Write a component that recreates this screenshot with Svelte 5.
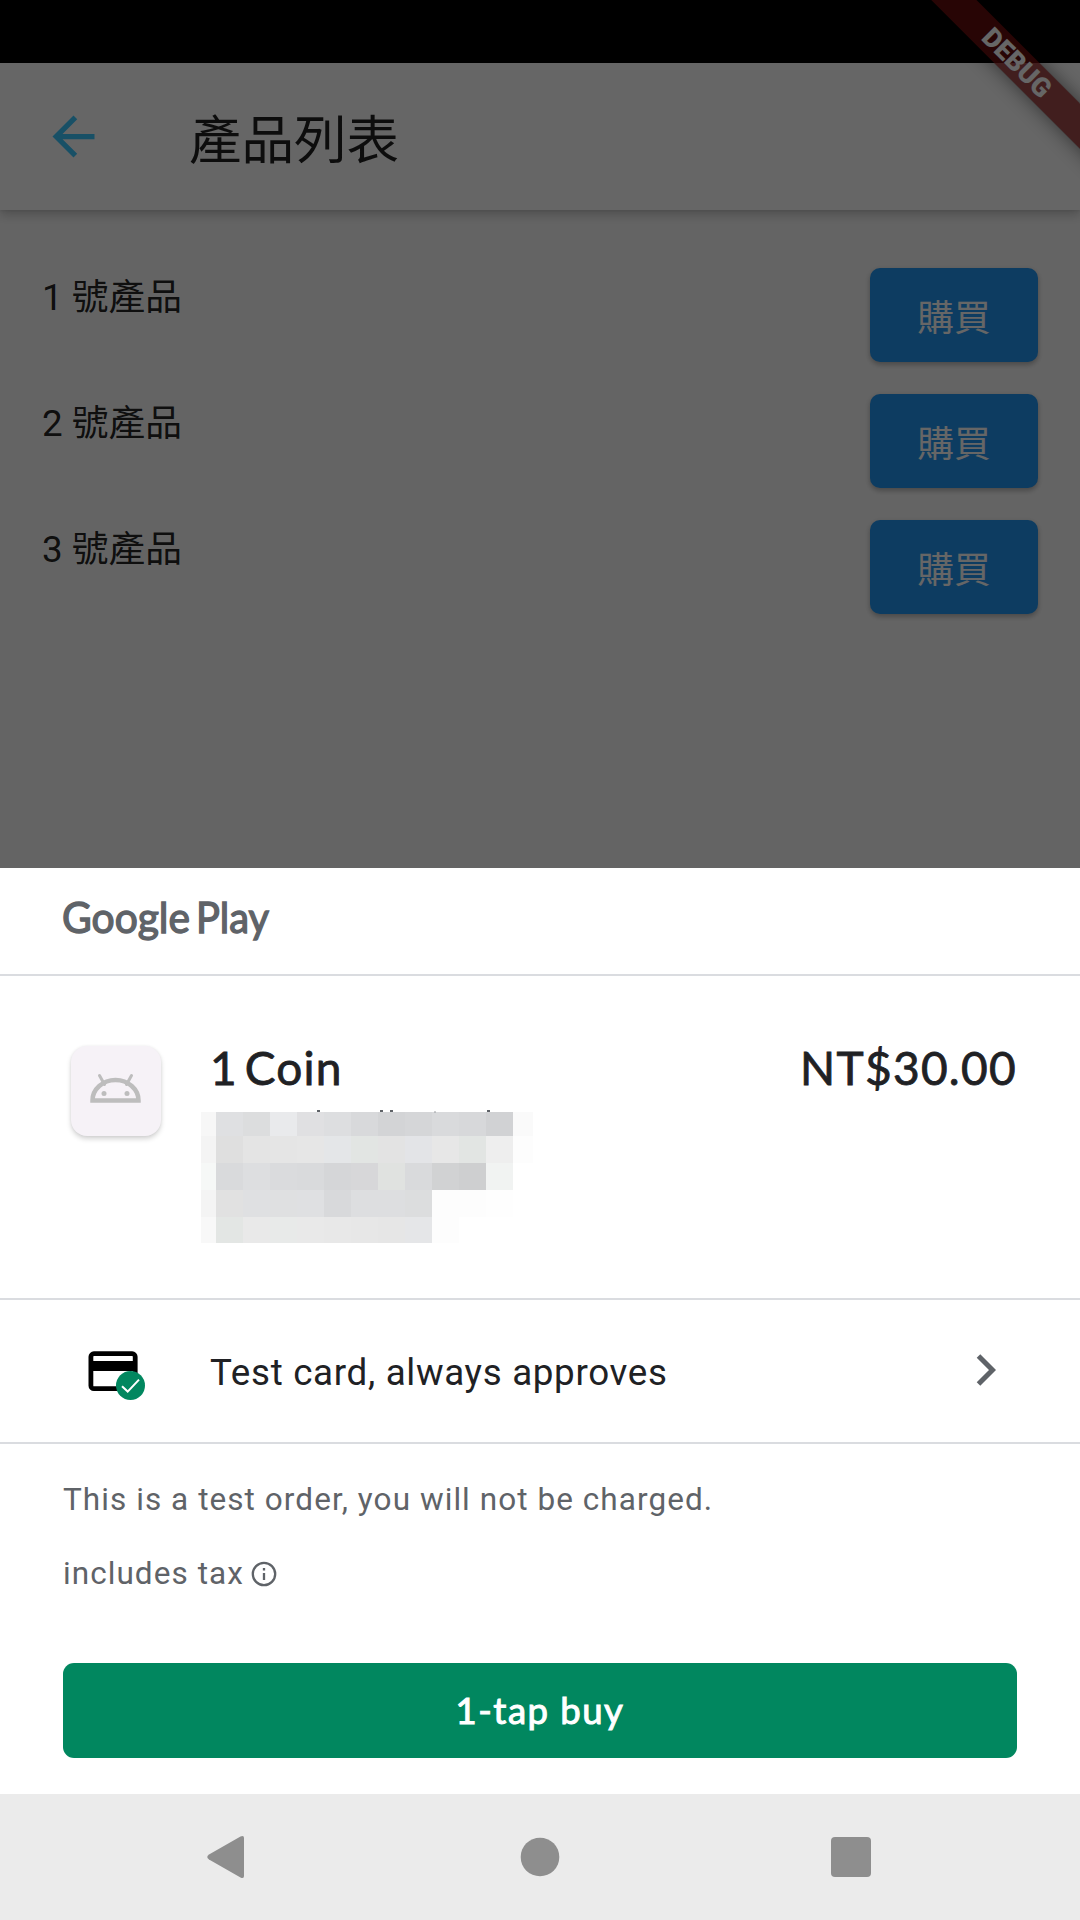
<script>
  const products = ['1 號產品', '2 號產品', '3 號產品'];

  // Redacted subtitle: one row per line of blocks, edge columns are narrower.
  const mosaic = [
    { h: 24, cells: ['#f7f7f7', '#dfe0e2', '#dcddde', '#e9eaec', '#e0e0e2', '#dddee0', '#d8d9db', '#d3d4d6', '#d5d6d8', '#d9dadc', '#d7d8da', '#d1d2d4', '#fafafa'] },
    { h: 27, cells: ['#f4f4f4', '#dfdfdf', '#e4e4e4', '#e5e5e5', '#e6e6e6', '#e4e6e8', '#e2e5e3', '#e3e3e3', '#e3e4e7', '#e7e7e7', '#e2e5e3', '#eeeeee', '#fdfdfd'] },
    { h: 27, cells: ['#f6f8f7', '#d9dadc', '#dddee0', '#dadbdd', '#d9dadc', '#d5d6d8', '#d7d7d9', '#e0e2e0', '#d9dadc', '#d1d2d3', '#cecfd0', '#f1f3f2', '#ffffff'] },
    { h: 27, cells: ['#f4f4f4', '#e1e1e1', '#dfe0e2', '#dfe0e1', '#dfe0e2', '#d8d9db', '#dddee0', '#dddee0', '#dcddde', '#fdfdfd', '#fdfdfd', '#fefefe', '#ffffff'] },
    { h: 26, cells: ['#f8f8f8', '#e3e6e4', '#e9e9e9', '#e8eae9', '#e9e9e9', '#e8e8e8', '#e7e7e7', '#e6e6e6', '#e5e6e8', '#fdfdfd', '#ffffff', '#ffffff', '#ffffff'] }
  ];
</script>

<div class="screen">
  <div class="app">
    <div class="status"></div>
    <header class="appbar">
      <svg class="back" width="63" height="63" viewBox="0 0 24 24"><path d="M20 11H7.83l5.59-5.59L12 4l-8 8 8 8 1.41-1.41L7.83 13H20v-2z" fill="currentColor" /></svg>
      <h1>產品列表</h1>
    </header>
    <main>
      {#each products as name}
        <div class="product">
          <span>{name}</span>
          <button>購買</button>
        </div>
      {/each}
    </main>
    <div class="ribbon">DEBUG</div>
    <div class="scrim"></div>
  </div>

  <section class="sheet">
    <div class="brand">
      <svg width="230" height="60" viewBox="0 0 230 60" role="img" aria-label="Google Play">
        <text x="0" y="43" textLength="128" lengthAdjust="spacingAndGlyphs">Google</text>
        <text x="134" y="43" textLength="73" lengthAdjust="spacingAndGlyphs">Play</text>
      </svg>
    </div>

    <div class="item">
      <div class="tile">
        <svg width="90" height="90" viewBox="0 0 90 90">
          <path d="M21.500 54.500A23 20.500 0 0 1 67.500 54.500Z" fill="none" stroke="#bdbdbd" stroke-width="4.500" />
          <path d="M28.500 29.500l5 9M60.500 29.500l-5 9" stroke="#bdbdbd" stroke-width="3" stroke-linecap="round" />
          <circle cx="33" cy="47.500" r="2.500" fill="#bdbdbd" /><circle cx="56" cy="47.500" r="2.500" fill="#bdbdbd" />
        </svg>
      </div>
      <div class="info">
        <h2>1 Coin</h2>
        <div class="redacted">
          <svg class="stubs" width="330" height="3" viewBox="0 0 330 3"><path d="M116 1h3M179 1h3M189 1h3M286 1h3" stroke="#5f6368" stroke-width="2" /><path d="M233 2h2" stroke="#9a9da1" /></svg>
          {#each mosaic as row}
            <div class="blocks" style="height:{row.h}px">
              {#each row.cells as color}<i style="background:{color}"></i>{/each}
            </div>
          {/each}
        </div>
      </div>
      <div class="price">NT$30.00</div>
    </div>

    <div class="payment">
      <svg class="card" width="64" height="60" viewBox="0 0 64 60">
        <rect x="5.900" y="8.700" width="44.300" height="35" rx="3" fill="none" stroke="#000" stroke-width="4.800" />
        <path d="M4 16h48v10H4z" fill="#000" />
        <circle cx="45.500" cy="40.500" r="14.500" fill="#01875f" />
        <path d="M37 41.300l5.700 5.300 11.300-12" fill="none" stroke="#fff" stroke-width="2" />
      </svg>
      <span>Test card, always approves</span>
      <svg class="chevron" width="20" height="32" viewBox="0 0 20 32"><path d="M2.500 2l14 14-14 14" fill="none" stroke="#5f6368" stroke-width="5" /></svg>
    </div>

    <div class="notes">
      <p>This is a test order, you will not be charged.</p>
      <p class="tax">includes tax
        <svg width="26" height="26" viewBox="0 0 26 26"><circle cx="13" cy="13" r="11.200" fill="none" stroke="#5f6368" stroke-width="2.300" /><path d="M13 12v7M13 7v2.500" stroke="#5f6368" stroke-width="2.300" /></svg>
      </p>
      <button class="buy">1-tap buy</button>
    </div>
  </section>

  <nav>
    <svg width="1080" height="126" viewBox="0 0 1080 126" fill="#8e8e8e">
      <path d="M209 60.500L240.500 42.500Q244 41 244 44V82Q244 85 240.500 83.500L209 65.500Q205.500 63 209 60.500Z" />
      <circle cx="540" cy="63" r="19.300" />
      <rect x="831" y="43" width="40" height="40" rx="4" />
    </svg>
  </nav>
</div>

<style>
  :global(body) { margin: 0; }
  .screen { width: 1080px; height: 1920px; display: flex; flex-direction: column; overflow: hidden; background: #fff; }
  h1, h2, p { margin: 0; font-weight: 400; }
  button { border: 0; padding: 0; font: inherit; color: #fff; }
  svg { display: block; }

  .app { position: relative; height: 868px; overflow: hidden; background: #fafafa; font-family: Roboto, 'Noto Sans CJK TC', sans-serif; color: rgba(0, 0, 0, .87); }
  .status { height: 63px; background: #000; }
  .appbar { position: relative; height: 147px; box-sizing: border-box; padding-left: 42px; display: flex; align-items: center; background: #fff; box-shadow: 0 5px 10px rgba(0, 0, 0, .2), 0 1px 3px rgba(0, 0, 0, .08); }
  .back { color: #3cc8ff; }
  h1 { margin-left: 84px; font-size: 52.500px; line-height: 76px; padding-top: 9px; font-weight: 400; }
  main { padding: 58px 42px 0; display: flex; flex-direction: column; gap: 32px; }
  .product { height: 94px; display: flex; justify-content: space-between; align-items: flex-start; font-size: 36.750px; }
  .product span { line-height: 54px; padding-top: 3px; }
  .product button { width: 168px; height: 94px; border-radius: 10px; background: #2196f3; padding-top: 0; box-shadow: 0 3px 5px rgba(0, 0, 0, .22), 0 1px 6px rgba(0, 0, 0, .08); }
  .ribbon { position: absolute; left: 857px; top: 47.250px; width: 320px; height: 31.500px; line-height: 32px; text-align: center; transform: rotate(45deg); background: linear-gradient(rgba(173, 24, 24, .58), rgba(173, 24, 24, .58)), rgba(0, 0, 0, .42); box-shadow: 0 0 20px rgba(0, 0, 0, .5); color: #fff; font-size: 26.800px; font-weight: 900; }
  .scrim { position: absolute; inset: 0; background: rgba(0, 0, 0, .6); }

  .sheet { height: 926px; color: #202124; font-family: Roboto, sans-serif; }
  .brand { height: 84px; border-bottom: 2px solid #dadce0; padding: 22px 0 0 62px; }
  .brand text { font: 400 42.500px Lato, sans-serif; fill: #5f6368; stroke: #5f6368; stroke-width: 1.400px; }
  .item { height: 322px; border-bottom: 2px solid #dadce0; display: flex; padding: 0 63px 0 71px; }
  .tile { width: 90px; height: 90px; margin-top: 70px; border-radius: 16px; background: #f6f2f7; box-shadow: 0 3px 5px rgba(0, 0, 0, .17), 0 0 3px rgba(0, 0, 0, .06); }
  .info { margin-left: 40px; padding-top: 64px; flex: 1; }
  h2, .price { font: 400 46px/56px Lato, sans-serif; -webkit-text-stroke: .8px currentColor; }
  h2 { padding-left: 9px; letter-spacing: 1.200px; word-spacing: -6px; }
  .price { padding-top: 64px; letter-spacing: 1.300px; }
  .redacted { padding-top: 16px; position: relative; }
  .stubs { position: absolute; top: 14px; left: 0; }
  .blocks { display: flex; }
  .blocks i { width: 27px; }
  .blocks i:first-child { width: 15px; }
  .blocks i:last-child { width: 20px; }
  .payment { height: 142px; border-bottom: 2px solid #dadce0; display: flex; align-items: center; padding: 0 84px 0 85px; font-size: 36.750px; }
  .payment span { flex: 1; margin-left: 61px; letter-spacing: .68px; padding-top: 3px; }
  .card { margin-top: 8px; }
  .chevron { margin-top: -2px; }
  .notes { padding: 36px 63px 0; color: #5f6368; font-size: 31.500px; line-height: 40px; letter-spacing: 1.060px; }
  .tax { margin-top: 34px; display: flex; align-items: center; gap: 7px; }
  .buy { display: block; width: 954px; height: 95px; margin-top: 69px; border-radius: 11px; background: #01875f; font: 400 36.500px Lato, sans-serif; letter-spacing: 1.500px; -webkit-text-stroke: 1px #fff; padding-bottom: 2px; }
  nav { height: 126px; background: #ebebeb; }
</style>
